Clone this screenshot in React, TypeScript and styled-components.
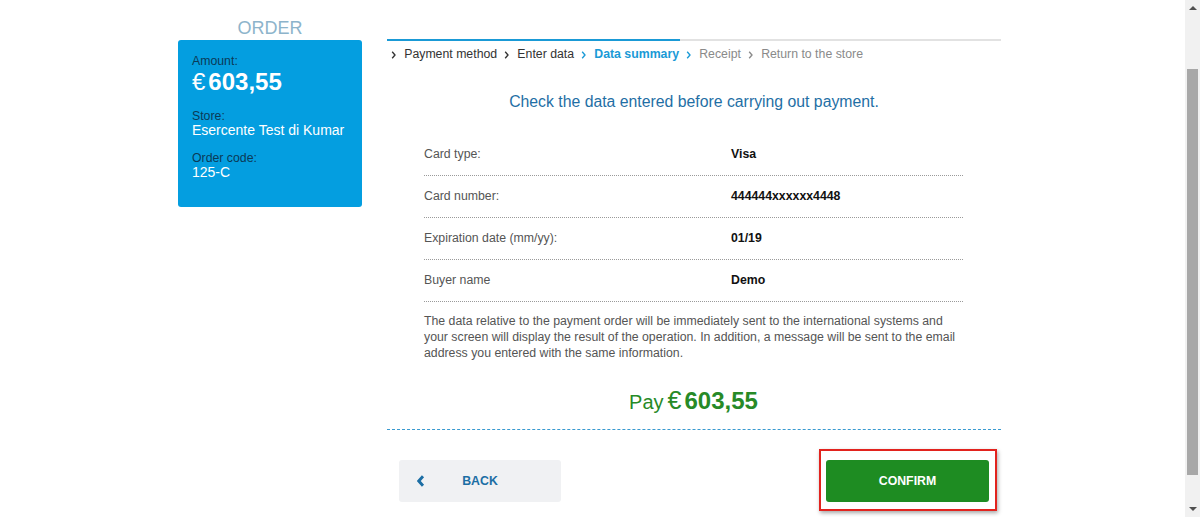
import React from 'react';
import styled, { createGlobalStyle } from 'styled-components';

const GlobalStyle = createGlobalStyle`
  html, body {
    margin: 0;
    padding: 0;
    background: #fff;
    overflow: hidden;
    font-family: "Liberation Sans", Arial, sans-serif;
  }
`;

const Page = styled.div`
  display: flex;
  gap: 25px;
  padding: 17px 0 0 178px;
  height: 500px;
`;

const Side = styled.aside`
  width: 184px;
  flex-shrink: 0;
`;

const SideTitle = styled.h2`
  margin: 0;
  font-size: 18px;
  line-height: 23px;
  font-weight: normal;
  text-align: center;
  color: #8db4cb;
`;

const OrderCard = styled.div`
  background: #049ee0;
  border-radius: 3px;
  padding: 14px 14px 27px;
  color: #fff;
`;

const CardLabel = styled.div<{ $gap?: number }>`
  font-size: 12.3px;
  line-height: 14px;
  color: #0b3a57;
  margin-top: ${(p) => p.$gap ?? 0}px;
`;

const CardValue = styled.div`
  font-size: 14px;
  line-height: 15px;
`;

const CardAmount = styled.div`
  font-size: 24px;
  line-height: 28px;
  font-weight: bold;

  span {
    font-weight: normal;
    margin-right: 3px;
  }
`;

const Main = styled.main`
  width: 614px;
  padding-top: 22px;
`;

const Progress = styled.div`
  display: grid;
  grid-template-columns: 293px 1fr;
  height: 2px;

  div:first-child {
    background: #1a9ad6;
  }
  div:last-child {
    background: #e2e2e2;
  }
`;

const Steps = styled.ol`
  display: flex;
  list-style: none;
  margin: 6px 0 0;
  padding: 0 0 0 4px;
  font-size: 12.3px;
  line-height: 15px;
`;

type StepState = 'done' | 'active' | 'todo';

const stepColor = (s: StepState) => (s === 'active' ? '#1a9ad6' : s === 'done' ? '#333' : '#8a8a8a');

const Step = styled.li<{ $state: StepState; $arrow: StepState }>`
  display: flex;
  align-items: center;
  gap: 8px;
  margin-right: 7px;
  color: ${(p) => stepColor(p.$state)};
  font-weight: ${(p) => (p.$state === 'active' ? 'bold' : 'normal')};

  svg {
    color: ${(p) => stepColor(p.$arrow)};
  }
`;

const Heading = styled.h1`
  margin: 31px 0 0;
  font-size: 15.8px;
  line-height: 18px;
  font-weight: normal;
  text-align: center;
  color: #1f6fa5;
`;

const Summary = styled.section`
  padding: 23px 38px 13px 37px;
`;

const Row = styled.div`
  display: grid;
  grid-template-columns: 307px 1fr;
  padding: 13px 0 14px;
  line-height: 14px;
  font-size: 12.3px;
  border-bottom: 1px dotted #9a9a9a;
`;

const Label = styled.span`
  color: #555;
`;

const Value = styled.span`
  color: #111;
  font-weight: bold;
`;

const Note = styled.p`
  margin: 11px 0 0;
  font-size: 12.3px;
  line-height: 16px;
  color: #555;
`;

const Pay = styled.div`
  margin-top: 25px;
  text-align: center;
  color: #278a27;
  font-size: 20px;
  line-height: 28px;

  .cur {
    font-size: 25px;
    margin: 0 3px 0 4px;
  }
  strong {
    font-size: 24px;
  }
`;

const Divider = styled.hr`
  margin: 0;
  border: 0;
  border-top: 1px dashed #3a9ad0;
`;

const Actions = styled.div`
  display: flex;
  justify-content: space-between;
  align-items: flex-start;
  padding: 19px 4px 0 12px;
`;

const BackButton = styled.button`
  display: grid;
  grid-template-columns: 1fr auto 1fr;
  align-items: center;
  width: 162px;
  height: 42px;
  margin-top: 11px;
  padding: 0 0 0 18px;
  border: 0;
  border-radius: 3px;
  background: #f0f1f3;
  color: #1c6ea4;
  font-family: inherit;
  font-size: 12.3px;
  font-weight: bold;

  svg {
    justify-self: start;
  }
  span {
    margin-left: -18px;
  }
`;

const Highlight = styled.div`
  border: 2px solid #e2231e;
  padding: 9px 6px 7px 5px;
  box-shadow: 1px 2px 4px rgba(0, 0, 0, 0.35);
`;

const ConfirmButton = styled.button`
  display: block;
  width: 163px;
  height: 42px;
  border: 0;
  border-radius: 3px;
  background: #1e8c22;
  color: #fff;
  font-family: inherit;
  font-size: 12.3px;
  font-weight: bold;
`;

const ScrollTrack = styled.div`
  position: fixed;
  top: 0;
  right: 0;
  width: 15px;
  height: 100%;
  background: #f1f1f1;
`;

const ScrollThumb = styled.div`
  position: absolute;
  top: 69px;
  left: 2px;
  width: 11px;
  height: 406px;
  background: #a8a8a8;
`;

const Arrow = styled.div<{ $down?: boolean }>`
  position: absolute;
  left: 4px;
  ${(p) => (p.$down ? 'bottom: 6px;' : 'top: 6px;')}
  width: 0;
  height: 0;
  border-left: 4px solid transparent;
  border-right: 4px solid transparent;
  ${(p) => (p.$down ? 'border-top: 4px solid #505050;' : 'border-bottom: 4px solid #505050;')}
`;

const Chevron = ({ size = 8, left = false }: { size?: number; left?: boolean }) => (
  <svg width={size * 0.65} height={size} viewBox="0 0 6.5 10" fill="none">
    <path
      d={left ? 'M5 1 L1.5 5 L5 9' : 'M1.5 1 L5 5 L1.5 9'}
      stroke="currentColor"
      strokeWidth={left ? 2.4 : 1.7}
    />
  </svg>
);

const steps: { name: string; state: StepState }[] = [
  { name: 'Payment method', state: 'done' },
  { name: 'Enter data', state: 'done' },
  { name: 'Data summary', state: 'active' },
  { name: 'Receipt', state: 'todo' },
  { name: 'Return to the store', state: 'todo' },
];

const rows = [
  ['Card type:', 'Visa'],
  ['Card number:', '444444xxxxxx4448'],
  ['Expiration date (mm/yy):', '01/19'],
  ['Buyer name', 'Demo'],
];

export default function App() {
  return (
    <>
      <GlobalStyle />
      <Page>
        <Side>
          <SideTitle>ORDER</SideTitle>
          <OrderCard>
            <CardLabel>Amount:</CardLabel>
            <CardAmount>
              <span>€</span>603,55
            </CardAmount>
            <CardLabel $gap={13}>Store:</CardLabel>
            <CardValue>Esercente Test di Kumar</CardValue>
            <CardLabel $gap={13}>Order code:</CardLabel>
            <CardValue>125-C</CardValue>
          </OrderCard>
        </Side>
        <Main>
          <Progress>
            <div />
            <div />
          </Progress>
          <Steps>
            {steps.map((s, i) => (
              <Step
                key={s.name}
                $state={s.state}
                $arrow={i > 0 && steps[i - 1].state === 'active' ? 'active' : s.state}
              >
                <Chevron />
                <span>{s.name}</span>
              </Step>
            ))}
          </Steps>
          <Heading>Check the data entered before carrying out payment.</Heading>
          <Summary>
            {rows.map(([l, v]) => (
              <Row key={l}>
                <Label>{l}</Label>
                <Value>{v}</Value>
              </Row>
            ))}
            <Note>
              The data relative to the payment order will be immediately sent to the international systems and your
              screen will display the result of the operation. In addition, a message will be sent to the email address
              you entered with the same information.
            </Note>
            <Pay>
              Pay<span className="cur">€</span>
              <strong>603,55</strong>
            </Pay>
          </Summary>
          <Divider />
          <Actions>
            <BackButton>
              <Chevron size={12} left />
              <span>BACK</span>
              <i />
            </BackButton>
            <Highlight>
              <ConfirmButton>CONFIRM</ConfirmButton>
            </Highlight>
          </Actions>
        </Main>
      </Page>
      <ScrollTrack>
        <Arrow />
        <ScrollThumb />
        <Arrow $down />
      </ScrollTrack>
    </>
  );
}
